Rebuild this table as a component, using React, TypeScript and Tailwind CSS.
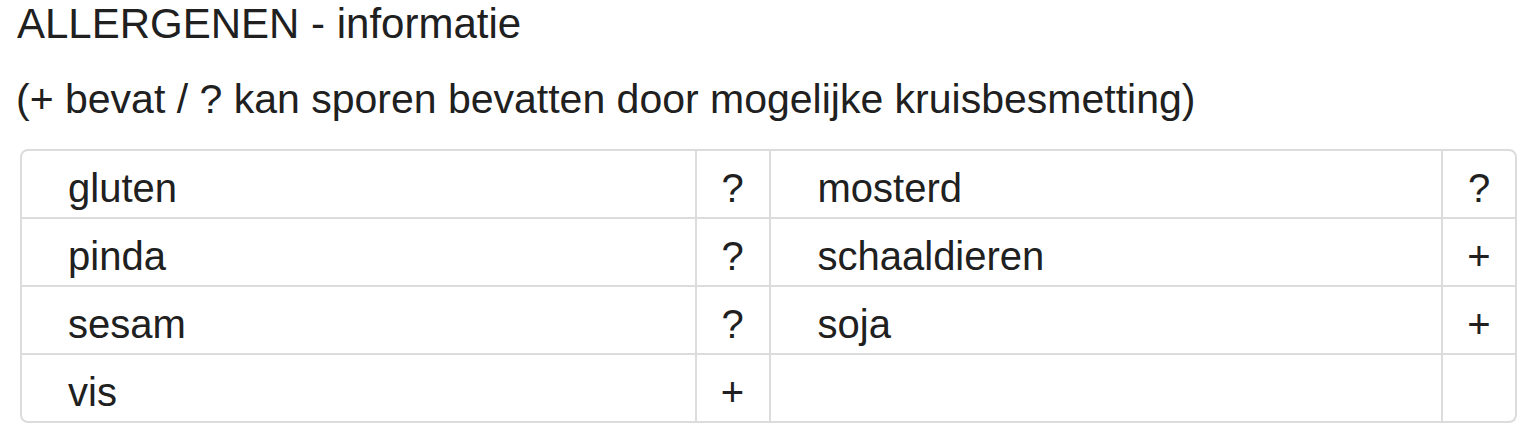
const ROWS: [string, string, string, string][] = [
  ["gluten", "?", "mosterd", "?"],
  ["pinda", "?", "schaaldieren", "+"],
  ["sesam", "?", "soja", "+"],
  ["vis", "+", "", ""],
];

export default function App() {
  return (
    <div className="w-[1532px] h-[444px] bg-white text-[#202020] font-['Liberation_Sans',Arial,sans-serif]">
      <h1 className="pl-[17px] text-[42px] leading-[48px] font-normal">ALLERGENEN - informatie</h1>
      <p className="mt-[27px] pl-[16px] text-[41px] leading-[48px]">
        (+ bevat / ? kan sporen bevatten door mogelijke kruisbesmetting)
      </p>

      <div className="mt-[26px] ml-[20px] w-[1497px] rounded-lg border-2 border-[#dcdcdc] overflow-hidden">
        {ROWS.map((r, i) => (
          <div
            key={i}
            className={`grid grid-cols-[1fr_74px_1fr_74px] h-[66px] text-[40px] ${i > 0 ? "border-t-2 border-[#dcdcdc]" : ""}`}
            style={i > 0 ? { boxSizing: "content-box" } : undefined}
          >
            <div className="pl-[46px] pt-[8px] leading-[58px]">{r[0]}</div>
            <div className="border-l-2 border-[#dcdcdc] pt-[8px] leading-[58px] text-center">{r[1]}</div>
            <div className="border-l-2 border-[#dcdcdc] pl-[47px] pt-[8px] leading-[58px]">{r[2]}</div>
            <div className="border-l-2 border-[#dcdcdc] pt-[8px] leading-[58px] text-center">{r[3]}</div>
          </div>
        ))}
      </div>
    </div>
  );
}
